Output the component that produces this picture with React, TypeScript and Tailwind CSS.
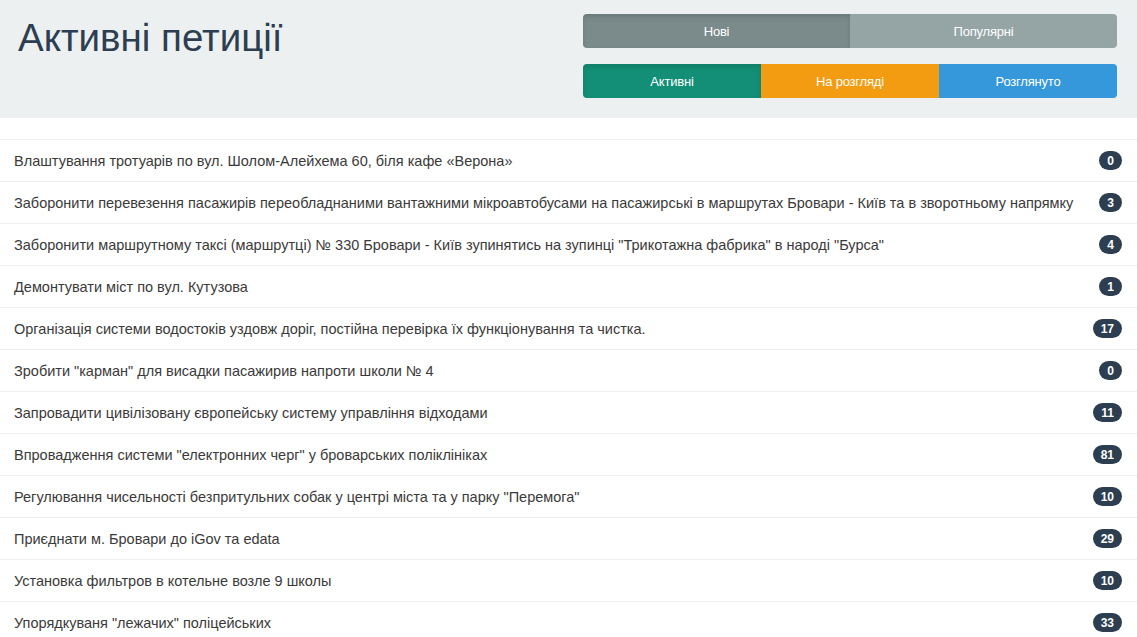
import React from "react";

const rows: [string, number][] = [
  ["Влаштування тротуарів по вул. Шолом-Алейхема 60, біля кафе «Верона»", 0],
  ["Заборонити перевезення пасажирів переобладнаними вантажними мікроавтобусами на пасажирські в маршрутах Бровари - Київ та в зворотньому напрямку", 3],
  ["Заборонити маршрутному таксі (маршрутці) № 330 Бровари - Київ зупинятись на зупинці \"Трикотажна фабрика\" в народі \"Бурса\"", 4],
  ["Демонтувати міст по вул. Кутузова", 1],
  ["Організація системи водостоків уздовж доріг, постійна перевірка їх функціонування та чистка.", 17],
  ["Зробити \"карман\" для висадки пасажирив напроти школи № 4", 0],
  ["Запровадити цивілізовану європейську систему управління відходами", 11],
  ["Впровадження системи \"електронних черг\" у броварських поліклініках", 81],
  ["Регулювання чисельності безпритульних собак у центрі міста та у парку \"Перемога\"", 10],
  ["Приєднати м. Бровари до iGov та edata", 29],
  ["Установка фильтров в котельне возле 9 школы", 10],
  ["Упорядкуваня \"лежачих\" поліцейських", 33],
];

export default function App() {
  return (
    <div className="w-[1137px] h-[637px] overflow-hidden bg-white" style={{ fontFamily: "'Liberation Sans', Arial, sans-serif" }}>
      <div className="bg-[#ecf0f1] h-[118px] flex justify-between pl-[18px] pr-[20px]">
        <h1 className="text-[38.5px] leading-none text-[#2c3e50] mt-[19px]">
          Активні петиції
        </h1>
        <div className="w-[534px] pt-[14px] flex flex-col gap-[16px]">
          <div className="flex h-[34px] rounded-[4px] overflow-hidden text-white text-[13px] tracking-[-0.2px]">
            <div className="flex-1 bg-[#7b8a8b] flex items-center justify-center pt-[2px] shadow-[inset_0_3px_5px_rgba(0,0,0,0.125)]">Нові</div>
            <div className="flex-1 bg-[#95a5a6] flex items-center justify-center pt-[2px]">Популярні</div>
          </div>
          <div className="flex h-[34px] rounded-[4px] overflow-hidden text-white text-[13px] tracking-[-0.2px]">
            <div className="flex-1 bg-[#128f76] flex items-center justify-center pt-[2px] shadow-[inset_0_3px_5px_rgba(0,0,0,0.125)]">Активні</div>
            <div className="flex-1 bg-[#f39c12] flex items-center justify-center pt-[2px]">На розгляді</div>
            <div className="flex-1 bg-[#3498db] flex items-center justify-center pt-[2px]">Розглянуто</div>
          </div>
        </div>
      </div>
      <div className="mt-[21px] border-t border-[#ecf0f1]">
        {rows.map(([t, n], i) => (
          <div key={i} className="h-[42px] border-b border-[#ecf0f1] flex items-center justify-between pl-[14px] pr-[15px] text-[14.5px] text-[#3a3a3a]">
            <span className="whitespace-nowrap pt-[2px]">{t}</span>
            <span className="min-w-[22px] h-[19px] px-[8px] rounded-full bg-[#2c3e50] text-white text-[12px] font-bold flex items-center justify-center">
              {n}
            </span>
          </div>
        ))}
      </div>
    </div>
  );
}
